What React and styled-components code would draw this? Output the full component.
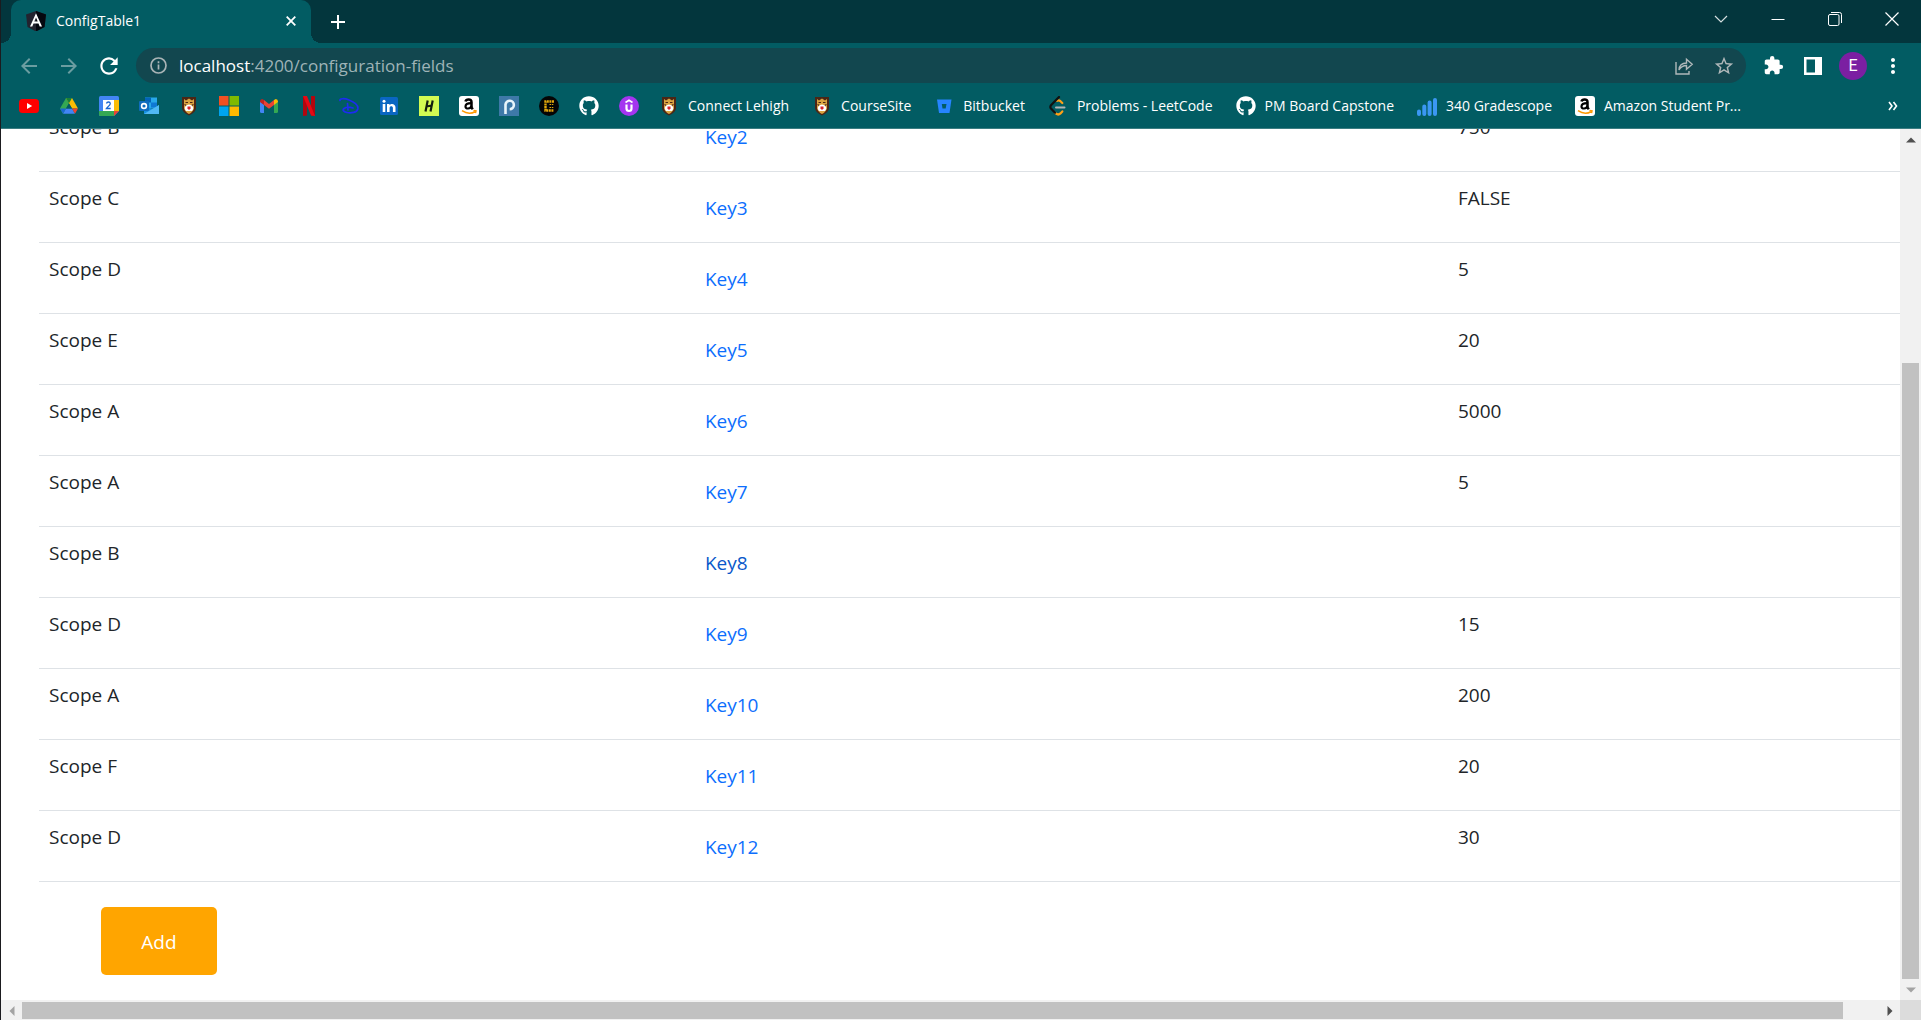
import React from "react";
import styled, { createGlobalStyle } from "styled-components";
import {
  MdArrowBack,
  MdArrowForward,
  MdRefresh,
  MdStarBorder,
  MdExtension,
  MdMoreVert,
} from "react-icons/md";
import { FaGithub } from "react-icons/fa";

const GlobalStyle = createGlobalStyle`
  * { box-sizing: border-box; }
  body { margin: 0; background: #fff; font-family: "Open Sans", "Noto Sans", sans-serif; }
  button, input { font: inherit; }
`;

const BrowserWindow = styled.div`
  display: flex;
  flex-direction: column;
  height: 100vh;
  overflow: hidden;
  border-left: 1px solid #1b1b1f;
`;

const TabStrip = styled.header`
  display: flex;
  height: 43px;
  padding: 0 1px 0 10px;
  background: #03363d;
`;

const Tab = styled.div`
  position: relative;
  display: flex;
  align-items: center;
  gap: 10px;
  width: 300px;
  padding: 0 10px 2px 15px;
  border-radius: 10px 10px 0 0;
  background: #025c63;
  color: #fff;
  font-size: 14px;

  &::before,
  &::after {
    content: "";
    position: absolute;
    bottom: 0;
    width: 10px;
    height: 10px;
  }
  &::before {
    right: 100%;
    background: radial-gradient(circle at 0 0, transparent 10px, #025c63 10px);
  }
  &::after {
    left: 100%;
    background: radial-gradient(circle at 100% 0, transparent 10px, #025c63 10px);
  }
`;

const TabTitle = styled.span`
  flex: 1;
  line-height: 20px;
`;

const IconButton = styled.button`
  display: flex;
  flex: none;
  align-items: center;
  justify-content: center;
  width: ${(p) => p.$width || 40}px;
  height: ${(p) => p.$height || 35}px;
  padding: 0;
  border: 0;
  background: none;
  color: ${(p) => p.$color || "#fff"};
`;

const NewTabButton = styled(IconButton)`
  margin: 4px 0 0 7px;
`;

const WindowControls = styled.div`
  display: flex;
  margin-left: auto;
`;

const Toolbar = styled.div`
  display: flex;
  height: 40px;
  padding: 5px 8px 0;
  background: #025c63;
`;

const AddressBar = styled.div`
  display: flex;
  flex: 1;
  align-items: center;
  margin: 0 7px;
  padding: 0 2px 0 14px;
  border-radius: 18px;
  background: #12474f;
  font-size: 17px;
`;

const HostLabel = styled.label`
  margin-left: 12px;
  color: #fff;
`;

const AddressInput = styled.input`
  flex: 1;
  min-width: 0;
  padding: 0;
  border: 0;
  outline: 0;
  background: none;
  color: #9fb4b7;
`;

const Avatar = styled.span`
  display: flex;
  align-items: center;
  justify-content: center;
  width: 28px;
  height: 28px;
  border-radius: 50%;
  background: #7b1fa2;
  font-family: Roboto, sans-serif;
  font-size: 16px;
`;

const BookmarksBar = styled.nav`
  display: flex;
  align-items: center;
  gap: 20px;
  height: 46px;
  padding: 0 18px;
  border-bottom: 1px solid #3b7d82;
  background: #025c63;
`;

const Bookmark = styled.a`
  display: flex;
  flex: none;
  align-items: center;
  gap: 9px;
  padding-right: ${(p) => (p.$labelled ? 3 : 0)}px;
  color: #fff;
  font-size: 14px;
  line-height: 20px;
  text-decoration: none;
`;

const OverflowButton = styled(IconButton)`
  margin-left: auto;
`;

const Viewport = styled.div`
  display: grid;
  flex: 1;
  grid-template: minmax(0, 1fr) 20px / minmax(0, 1fr) 21px;
  min-height: 0;
`;

const Page = styled.main`
  display: flex;
  flex-direction: column;
  justify-content: flex-end;
  overflow: hidden;
  padding: 0 0 25px 38px;
  background: #fff;
`;

const FieldsTable = styled.table`
  flex: none;
  width: 100%;
  border-spacing: 0;
  table-layout: fixed;
  color: #212529;
  font-size: 19px;
  line-height: 30px;
`;

const Column = styled.col`
  width: ${(p) => p.$width};
`;

const Cell = styled.td`
  height: 71px;
  padding: 11px 10px 9px;
  border-bottom: 1px solid #dee2e6;
  vertical-align: top;
`;

const KeyLink = styled.a`
  display: inline-block;
  padding: 10px 15px;
  color: ${(p) => (p.$active ? "#0a58ca" : "#0d6efd")};
  text-decoration: none;
  vertical-align: top;
`;

const AddButton = styled.button`
  flex: none;
  align-self: flex-start;
  width: 116px;
  height: 68px;
  margin: 25px 0 0 62px;
  padding: 2px 0 0;
  border: 0;
  border-radius: 5px;
  background: #ffa500;
  color: #fff;
  font-size: 19px;
`;

const Scrollbar = styled.div`
  display: flex;
  flex-direction: ${(p) => (p.$vertical ? "column" : "row")};
  background: #f1f1f1;
`;

const ScrollTrack = styled.div`
  display: flex;
  flex: 1;
  flex-direction: ${(p) => (p.$vertical ? "column" : "row")};
  padding: ${(p) => (p.$vertical ? "0 2px" : "2px 0 1px")};
`;

const ScrollSpace = styled.div`
  flex: ${(p) => p.$size};
`;

const ScrollThumb = styled(ScrollSpace)`
  background: #c1c1c1;
`;

const ScrollCorner = styled.div`
  background: #dcdcdc;
`;

const Icon = ({ size = 20, box = 20, children }) => (
  <svg width={size} height={size} viewBox={`0 0 ${box} ${box}`} fill="none" aria-hidden="true">
    {children}
  </svg>
);

const AngularIcon = () => (
  <Icon>
    <path d="M10 0l10 3.400-1.500 12.600L10 20.500 1.500 16 0 3.400z" fill="#23232f" />
    <path d="M10 0l10 3.400-1.500 12.600L10 20.500z" fill="#05070f" />
    <path fillRule="evenodd" d="M10 2.300L4 15.500h2.300l1.200-3h5l1.200 3H16zm0 4.300l1.700 4H8.300z" fill="#fff" />
  </Icon>
);

const YouTubeIcon = () => (
  <Icon>
    <rect y="3" width="20" height="14" rx="3.500" fill="#f00" />
    <path d="M8 7l5.200 3L8 13z" fill="#fff" />
  </Icon>
);

const DriveIcon = () => (
  <Icon>
    <path d="M7 2l3 5.200L4 17.700l-3-5.200z" fill="#34a853" />
    <path d="M13 2l6 10.500h-6L7 2z" fill="#fbbc04" />
    <path d="M7 2h6l-3 5.200z" fill="#188038" />
    <path d="M7 12.500h6l3 5.200H4z" fill="#4285f4" />
    <path d="M1 12.500h6l-3 5.200z" fill="#1967d2" />
    <path d="M13 12.500h6l-3 5.200z" fill="#ea4335" />
    <path d="M10 7.400l3 5.100H7z" fill="#025c63" />
  </Icon>
);

const CalendarIcon = () => (
  <Icon>
    <path d="M0 1.500Q0 0 1.500 0H18.500Q20 0 20 1.500V15L15 20H1.500Q0 20 0 18.500z" fill="#4285f4" />
    <path d="M15 4h5v11h-5z" fill="#fbbc04" />
    <path d="M0 15h15v5H1.500Q0 20 0 18.500z" fill="#34a853" />
    <path d="M15 15h5l-5 5z" fill="#ea4335" />
    <path d="M4 4h11v11H4z" fill="#fff" />
    <path d="M7.500 7.500Q7.800 6 9.500 6t1.800 1.500c0 1.700-2 2.500-3.800 5h4.200" stroke="#1967d2" strokeWidth="1.300" />
  </Icon>
);

const OutlookIcon = () => (
  <Icon>
    <path d="M6 1.500h12v11H6z" fill="#28a8ea" />
    <path d="M6 1.500h6v5H6z" fill="#0364b8" />
    <path d="M12 6.500h6v5h-6z" fill="#0f78d4" />
    <path d="M5 9l8 4 7-4v9H5z" fill="#1490df" />
    <path d="M5 18l15-9v9z" fill="#50b8f4" />
    <rect y="5" width="10" height="10" rx="1" fill="#0f6cbd" />
    <circle cx="5" cy="10" r="2.400" stroke="#fff" strokeWidth="1.600" />
  </Icon>
);

const LehighIcon = () => (
  <Icon>
    <path d="M3 1h14v11q0 4-7 7.500Q3 16 3 12z" fill="#4b2616" />
    <path d="M5 3l2 1.500L10 2.500l3 2L15 3v9q-1 4-5 6-4-2-5-6z" fill="#d9a441" />
    <path d="M6.500 6.500h2.500M11 6.500h2.500M5.500 8.500l2 1M14.500 8.500l-2 1" stroke="#4b2616" strokeWidth="1.200" />
    <path d="M6 11q1-2.500 4-2.500t4 2.500-1 4H7q-2-1.500-1-4z" fill="#fff" />
    <path d="M8.500 10.500h3v2L10 14l-1.500-1.500z" fill="#d8232a" />
  </Icon>
);

const MicrosoftIcon = () => (
  <Icon>
    <path d="M0 0h9.500v9.500H0z" fill="#f25022" />
    <path d="M10.500 0H20v9.500h-9.500z" fill="#7fba00" />
    <path d="M0 10.500h9.500V20H0z" fill="#00a4ef" />
    <path d="M10.500 10.500H20V20h-9.500z" fill="#ffb900" />
  </Icon>
);

const GmailIcon = () => (
  <Icon>
    <path d="M1 5.500l4 3V17H2.500Q1 17 1 15.500z" fill="#4285f4" />
    <path d="M15 8.500l4-3v10q0 1.500-1.500 1.500H15z" fill="#34a853" />
    <path d="M5 4l5 4 5-4v5l-5 3.800L5 9z" fill="#ea4335" />
    <path d="M1 5.500Q1 3 3.200 3L5 4v5L1 6z" fill="#c5221f" />
    <path d="M19 5.500Q19 3 16.800 3L15 4v5l4-3z" fill="#fbbc04" />
  </Icon>
);

const NetflixIcon = () => (
  <Icon>
    <path d="M4 0h4v19.500L4 20zM12 0h4v20l-4-.5z" fill="#b1060f" />
    <path d="M4 0h4l8 20-4-.5z" fill="#e50914" />
  </Icon>
);

const DisneyIcon = () => (
  <Icon>
    <path d="M1 4.500C.5 2.500 5 2 10 4c6 2.300 9.500 5.500 8.800 9-.8 3.500-6.500 4.500-11 3.500-3.500-.8-4.500-2.500-2.800-4 2-1.600 6-1.500 9-.5M8.500 7.500L9 14" stroke="#1d2cf0" strokeWidth="1.700" strokeLinecap="round" />
  </Icon>
);

const LinkedInIcon = () => (
  <Icon>
    <rect x="1" y="1" width="18" height="18" rx="1.500" fill="#0a66c2" />
    <path d="M3.700 8h2.600v8H3.700zM8 8h2.500v1.200c1.500-2.200 6-1.800 6 2.300V16h-2.600v-4.200c0-2.200-3.300-2-3.300 0V16H8z" fill="#fff" />
    <circle cx="5" cy="5.200" r="1.500" fill="#fff" />
  </Icon>
);

const HandshakeIcon = () => (
  <Icon>
    <path d="M0 0h20v20H0z" fill="#d3fb52" />
    <path d="M8.700 4.500L6.500 15.500M13.700 4.500l-2.200 11M7.600 10.500l5-1" stroke="#14200f" strokeWidth="2.200" />
  </Icon>
);

const AmazonIcon = () => (
  <Icon>
    <rect width="20" height="20" rx="3" fill="#fff" />
    <path d="M6.500 5.500C7 3 12.500 2.200 12.500 6v5.500l1.300 1.700" stroke="#000" strokeWidth="2.500" />
    <path d="M12.500 7.200c-4 0-6 .9-6 3.200 0 3 4.800 2.800 6-.6" stroke="#000" strokeWidth="2.200" />
    <path d="M3 14.700q7 4.600 13.300.8M14.500 14.500l2.500.3-.5 2.400" stroke="#f90" strokeWidth="1.500" />
  </Icon>
);

const PandoraIcon = () => (
  <Icon>
    <path d="M0 0h20v20H0z" fill="#3e79a8" />
    <path d="M6.500 18V8.500a4.200 4.200 0 1 1 4.200 4.700" stroke="#e8f4fb" strokeWidth="2.600" />
  </Icon>
);

const CodeIcon = () => (
  <Icon>
    <circle cx="10" cy="10" r="10" fill="#050505" />
    <path d="M15 5.500H6.500v9H15" stroke="#e3a80c" strokeWidth="2.400" strokeDasharray="2 .6" />
    <path d="M10.500 8.500h4M10.500 11.500h4" stroke="#e3a80c" strokeWidth="1.200" strokeDasharray="1.500 .8" />
  </Icon>
);

const UdemyIcon = () => (
  <Icon>
    <circle cx="10" cy="10" r="10" fill="#a435f0" />
    <path d="M6.500 6.500L10 4.300l3.500 2.200" stroke="#fff" strokeWidth="1.700" />
    <path d="M7.500 8.500v4a2.500 2.500 0 0 0 5 0v-4" stroke="#fff" strokeWidth="2.200" />
  </Icon>
);

const BitbucketIcon = () => (
  <Icon>
    <path d="M3 3.500h14.500L15.500 17H5z" fill="#2684ff" />
    <path d="M7.800 8h4.700l-.8 4.500H8.500z" fill="#025c63" />
  </Icon>
);

const LeetCodeIcon = () => (
  <Icon>
    <path d="M9 4.800q1.800-1 3.500.4l1.800 1.800M7 16.800q3 3 5.500.6l1.800-2" stroke="#ffa116" strokeWidth="2.200" strokeLinecap="round" />
    <path d="M11 1L3 9.300q-1.300 1.600 0 3.200l4 4.200" stroke="#111" strokeWidth="2.200" strokeLinecap="round" />
    <path d="M8 11.500h8.500" stroke="#b3b3b3" strokeWidth="2" strokeLinecap="round" />
  </Icon>
);

const GradescopeIcon = () => (
  <Icon>
    <path d="M2 18v-2.500M7.300 18V10.500M12.600 18V6.500M18 18V4" stroke="#3b97f3" strokeWidth="4" strokeLinecap="round" />
  </Icon>
);

const bookmarks = [
  { name: "YouTube", icon: <YouTubeIcon /> },
  { name: "Drive", icon: <DriveIcon /> },
  { name: "Calendar", icon: <CalendarIcon /> },
  { name: "Outlook", icon: <OutlookIcon /> },
  { name: "Lehigh", icon: <LehighIcon /> },
  { name: "Microsoft", icon: <MicrosoftIcon /> },
  { name: "Gmail", icon: <GmailIcon /> },
  { name: "Netflix", icon: <NetflixIcon /> },
  { name: "Disney", icon: <DisneyIcon /> },
  { name: "LinkedIn", icon: <LinkedInIcon /> },
  { name: "Handshake", icon: <HandshakeIcon /> },
  { name: "Amazon", icon: <AmazonIcon /> },
  { name: "Pandora", icon: <PandoraIcon /> },
  { name: "Code", icon: <CodeIcon /> },
  { name: "GitHub", icon: <FaGithub size={20} /> },
  { name: "Udemy", icon: <UdemyIcon /> },
  { text: "Connect Lehigh", icon: <LehighIcon /> },
  { text: "CourseSite", icon: <LehighIcon /> },
  { text: "Bitbucket", icon: <BitbucketIcon /> },
  { text: "Problems - LeetCode", icon: <LeetCodeIcon /> },
  { text: "PM Board Capstone", icon: <FaGithub size={20} /> },
  { text: "340 Gradescope", icon: <GradescopeIcon /> },
  { text: "Amazon Student Pr...", icon: <AmazonIcon /> },
];

const fields = [
  { scope: "Scope B", key: "Key2", value: "750" },
  { scope: "Scope C", key: "Key3", value: "FALSE" },
  { scope: "Scope D", key: "Key4", value: "5" },
  { scope: "Scope E", key: "Key5", value: "20" },
  { scope: "Scope A", key: "Key6", value: "5000" },
  { scope: "Scope A", key: "Key7", value: "5" },
  { scope: "Scope B", key: "Key8", value: "", active: true },
  { scope: "Scope D", key: "Key9", value: "15" },
  { scope: "Scope A", key: "Key10", value: "200" },
  { scope: "Scope F", key: "Key11", value: "20" },
  { scope: "Scope D", key: "Key12", value: "30" },
];

const ScrollArrow = ({ label, d, color }) => (
  <IconButton $width={21} $height={21} aria-label={label}>
    <Icon size={10} box={10}>
      <path d={d} fill={color} />
    </Icon>
  </IconButton>
);

export default function App() {
  return (
    <>
      <GlobalStyle />
      <BrowserWindow>
        <TabStrip>
          <Tab>
            <AngularIcon />
            <TabTitle>ConfigTable1</TabTitle>
            <IconButton $width={20} $height={20} aria-label="Close tab">
              <Icon size={10} box={10}>
                <path d="M.7.7l8.600 8.600M9.300.7L.7 9.300" stroke="#fff" strokeWidth="1.800" />
              </Icon>
            </IconButton>
          </Tab>
          <NewTabButton aria-label="New tab">
            <Icon size={16} box={16}>
              <path d="M8 1v14M1 8h14" stroke="#fff" strokeWidth="2" />
            </Icon>
          </NewTabButton>
          <WindowControls>
            <IconButton $width={57} $height={37} aria-label="Search tabs">
              <Icon size={14} box={14}>
                <path d="M1 4l6 6 6-6" stroke="#d5dfe0" strokeWidth="1.200" />
              </Icon>
            </IconButton>
            <IconButton $width={57} $height={37} aria-label="Minimize">
              <Icon size={14} box={14}>
                <path d="M.5 7.500h13" stroke="#fff" />
              </Icon>
            </IconButton>
            <IconButton $width={57} $height={37} aria-label="Restore">
              <Icon size={14} box={14}>
                <rect x=".5" y="2.500" width="10.500" height="11" rx="1.500" stroke="#fff" />
                <path d="M3 .5h8.500q2 0 2 2V11" stroke="#fff" />
              </Icon>
            </IconButton>
            <IconButton $width={57} $height={37} aria-label="Close">
              <Icon size={14} box={14}>
                <path d="M.5.5l13 13M13.500.5l-13 13" stroke="#fff" strokeWidth="1.200" />
              </Icon>
            </IconButton>
          </WindowControls>
        </TabStrip>

        <Toolbar>
          <IconButton $color="#6b9da1" aria-label="Back">
            <MdArrowBack size={24} />
          </IconButton>
          <IconButton $color="#6b9da1" aria-label="Forward">
            <MdArrowForward size={24} />
          </IconButton>
          <IconButton aria-label="Reload">
            <MdRefresh size={26} />
          </IconButton>
          <AddressBar>
            <Icon size={17} box={17}>
              <circle cx="8.500" cy="8.500" r="7.500" stroke="#a9b4b6" strokeWidth="1.700" />
              <path d="M8.500 7.500v5M8.500 4.300v1.900" stroke="#a9b4b6" strokeWidth="1.700" />
            </Icon>
            <HostLabel htmlFor="address">localhost</HostLabel>
            <AddressInput id="address" type="text" defaultValue=":4200/configuration-fields" />
            <IconButton $color="#b0b8ba" aria-label="Share">
              <Icon>
                <path d="M2 6v12h13v-3" stroke="currentColor" strokeWidth="1.400" />
                <path d="M5 14c.3-4.500 3-7 7.500-7V3.200l5.700 5-5.700 5v-3.700C9 9.500 6.800 11 5 14z" stroke="currentColor" strokeWidth="1.400" />
              </Icon>
            </IconButton>
            <IconButton $color="#b0b8ba" aria-label="Bookmark this page">
              <MdStarBorder size={22} />
            </IconButton>
          </AddressBar>
          <IconButton aria-label="Extensions">
            <MdExtension size={21} />
          </IconButton>
          <IconButton aria-label="Side panel">
            <Icon size={18} box={18}>
              <path fillRule="evenodd" d="M0 0h18v18H0zM2.500 2.500v13H11v-13z" fill="#fff" />
            </Icon>
          </IconButton>
          <IconButton aria-label="Profile">
            <Avatar>E</Avatar>
          </IconButton>
          <IconButton aria-label="Menu">
            <MdMoreVert size={24} />
          </IconButton>
        </Toolbar>

        <BookmarksBar>
          {bookmarks.map((b) => (
            <Bookmark key={b.name || b.text} href="#" aria-label={b.name} $labelled={Boolean(b.text)}>
              {b.icon}
              {b.text}
            </Bookmark>
          ))}
          <OverflowButton $width={20} aria-label="More bookmarks">
            <Icon size={10} box={10}>
              <path d="M1 1l3 4-3 4M5.500 1l3 4-3 4" stroke="#fff" strokeWidth="1.600" />
            </Icon>
          </OverflowButton>
        </BookmarksBar>

        <Viewport>
          <Page>
            <FieldsTable>
              <colgroup>
                <Column $width="34.44%" />
                <Column $width="41.27%" />
                <Column $width="auto" />
              </colgroup>
              <tbody>
                {fields.map((f) => (
                  <tr key={f.key}>
                    <Cell>{f.scope}</Cell>
                    <Cell>
                      <KeyLink href="#" $active={f.active}>
                        {f.key}
                      </KeyLink>
                    </Cell>
                    <Cell>{f.value}</Cell>
                  </tr>
                ))}
              </tbody>
            </FieldsTable>
            <AddButton>Add</AddButton>
          </Page>
          <Scrollbar $vertical>
            <ScrollArrow label="Scroll up" d="M0 7.500L5 2.500l5 5z" color="#505050" />
            <ScrollTrack $vertical>
              <ScrollSpace $size={213} />
              <ScrollThumb $size={616} />
            </ScrollTrack>
            <ScrollArrow label="Scroll down" d="M0 2.500h10l-5 5z" color="#a3a3a3" />
          </Scrollbar>
          <Scrollbar>
            <ScrollArrow label="Scroll left" d="M7.500 0v10l-5-5z" color="#a3a3a3" />
            <ScrollTrack>
              <ScrollThumb $size={1821} />
              <ScrollSpace $size={36} />
            </ScrollTrack>
            <ScrollArrow label="Scroll right" d="M2.500 0v10l5-5z" color="#505050" />
          </Scrollbar>
          <ScrollCorner />
        </Viewport>
      </BrowserWindow>
    </>
  );
}
